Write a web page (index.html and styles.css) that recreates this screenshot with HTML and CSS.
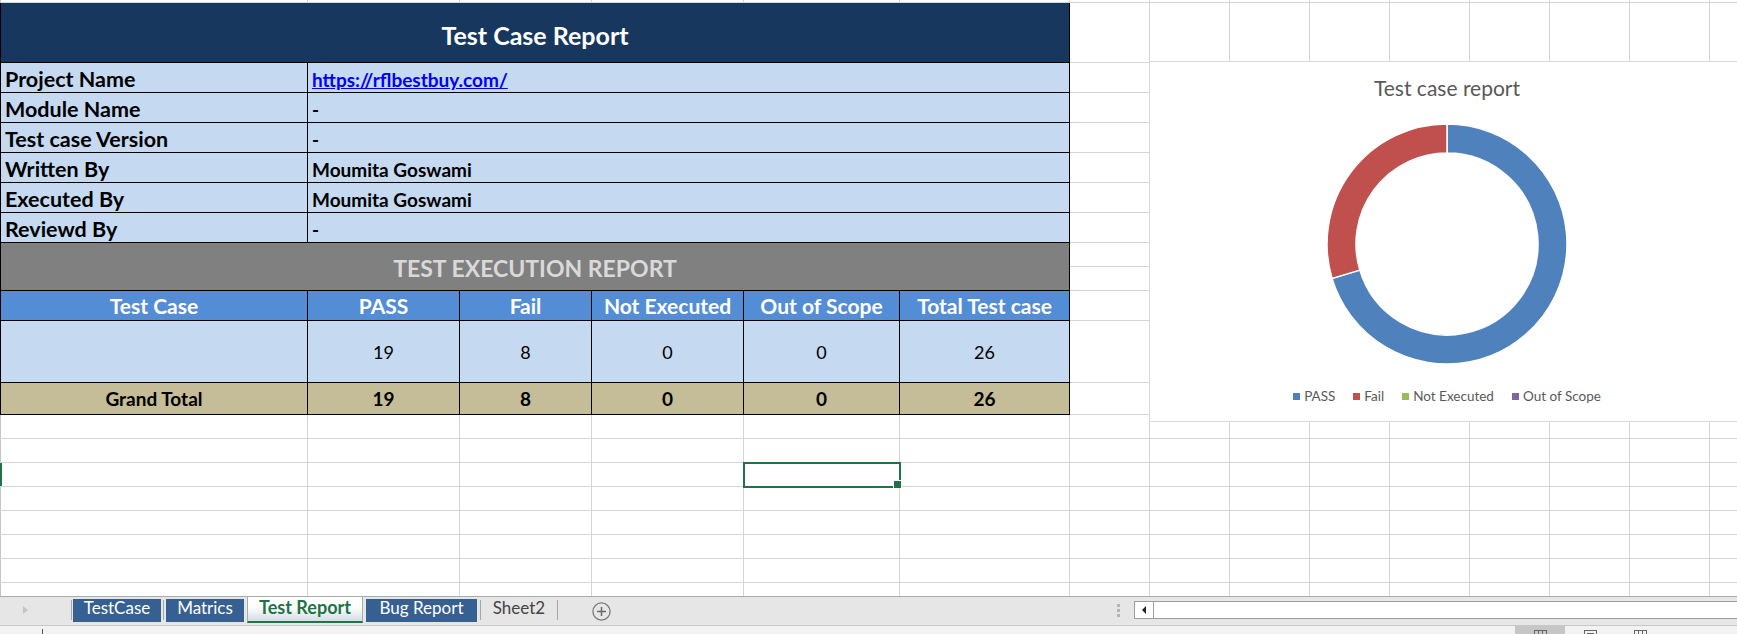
FILE: index.html
```html
<!DOCTYPE html>
<html lang="en">
<head>
<meta charset="utf-8">
<title>Test Case Report</title>
<link rel="stylesheet" href="styles.css">
</head>
<body>
<div class="app">
  <div class="sheet">
    <div class="report">
      <div class="title">Test Case Report</div>
      <div class="lab">Project Name</div><div class="val"><a class="link" href="#">https://rflbestbuy.com/</a></div>
      <div class="lab">Module Name</div><div class="val">-</div>
      <div class="lab">Test case Version</div><div class="val">-</div>
      <div class="lab">Written By</div><div class="val">Moumita Goswami</div>
      <div class="lab">Executed By</div><div class="val">Moumita Goswami</div>
      <div class="lab">Reviewd By</div><div class="val">-</div>
      <div class="band">TEST EXECUTION REPORT</div>
      <div class="th">Test Case</div><div class="th">PASS</div><div class="th">Fail</div><div class="th">Not Executed</div><div class="th">Out of Scope</div><div class="th">Total Test case</div>
      <div class="td"></div><div class="td">19</div><div class="td">8</div><div class="td">0</div><div class="td">0</div><div class="td">26</div>
      <div class="tt">Grand Total</div><div class="tt">19</div><div class="tt">8</div><div class="tt">0</div><div class="tt">0</div><div class="tt">26</div>
    </div>
    <div class="sel"></div>
    <div class="rowmark"></div>

    <div class="c"></div><div class="c"></div><div class="c"></div><div class="c"></div><div class="c"></div><div class="c"></div><div class="c"></div><div class="c"></div><div class="c"></div><div class="c"></div><div class="c"></div><div class="c"></div><div class="c"></div><div class="c"></div><div class="c"></div>
    <div class="c"></div><div class="c"></div><div class="c"></div><div class="c"></div><div class="c"></div><div class="c"></div><div class="c"></div><div class="c"></div><div class="c"></div><div class="c"></div><div class="c"></div><div class="c"></div><div class="c"></div><div class="c"></div><div class="c"></div>
    <div class="c"></div><div class="c"></div><div class="c"></div><div class="c"></div><div class="c"></div><div class="c"></div><div class="c"></div><div class="c"></div><div class="c"></div><div class="c"></div><div class="c"></div><div class="c"></div><div class="c"></div><div class="c"></div><div class="c"></div>
    <div class="c"></div><div class="c"></div><div class="c"></div><div class="c"></div><div class="c"></div><div class="c"></div><div class="c"></div><div class="c"></div><div class="c"></div><div class="c"></div><div class="c"></div><div class="c"></div><div class="c"></div><div class="c"></div><div class="c"></div>
    <div class="c"></div><div class="c"></div><div class="c"></div><div class="c"></div><div class="c"></div><div class="c"></div><div class="c"></div><div class="c"></div><div class="c"></div><div class="c"></div><div class="c"></div><div class="c"></div><div class="c"></div><div class="c"></div><div class="c"></div>
    <div class="c"></div><div class="c"></div><div class="c"></div><div class="c"></div><div class="c"></div><div class="c"></div><div class="c"></div><div class="c"></div><div class="c"></div><div class="c"></div><div class="c"></div><div class="c"></div><div class="c"></div><div class="c"></div><div class="c"></div>
    <div class="c"></div><div class="c"></div><div class="c"></div><div class="c"></div><div class="c"></div><div class="c"></div><div class="c"></div><div class="c"></div><div class="c"></div><div class="c"></div><div class="c"></div><div class="c"></div><div class="c"></div><div class="c"></div><div class="c"></div>
    <div class="c"></div><div class="c"></div><div class="c"></div><div class="c"></div><div class="c"></div><div class="c"></div><div class="c"></div><div class="c"></div><div class="c"></div><div class="c"></div><div class="c"></div><div class="c"></div><div class="c"></div><div class="c"></div><div class="c"></div>
    <div class="c"></div><div class="c"></div><div class="c"></div><div class="c"></div><div class="c"></div><div class="c"></div><div class="c"></div><div class="c"></div><div class="c"></div><div class="c"></div><div class="c"></div><div class="c"></div><div class="c"></div><div class="c"></div><div class="c"></div>
    <div class="c"></div><div class="c"></div><div class="c"></div><div class="c"></div><div class="c"></div><div class="c"></div><div class="c"></div><div class="c"></div><div class="c"></div><div class="c"></div><div class="c"></div><div class="c"></div><div class="c"></div><div class="c"></div><div class="c"></div>
    <div class="c"></div><div class="c"></div><div class="c"></div><div class="c"></div><div class="c"></div><div class="c"></div><div class="c"></div><div class="c"></div><div class="c"></div><div class="c"></div><div class="c"></div><div class="c"></div><div class="c"></div><div class="c"></div><div class="c"></div>
    <div class="c"></div><div class="c"></div><div class="c"></div><div class="c"></div><div class="c"></div><div class="c"></div><div class="c"></div><div class="c"></div><div class="c"></div><div class="c"></div><div class="c"></div><div class="c"></div><div class="c"></div><div class="c"></div><div class="c"></div>
    <div class="c"></div><div class="c"></div><div class="c"></div><div class="c"></div><div class="c"></div><div class="c"></div><div class="c"></div><div class="c"></div><div class="c"></div><div class="c"></div><div class="c"></div><div class="c"></div><div class="c"></div><div class="c"></div><div class="c"></div>
    <div class="c"></div><div class="c"></div><div class="c"></div><div class="c"></div><div class="c"></div><div class="c"></div><div class="c"></div><div class="c"></div><div class="c"></div><div class="c"></div><div class="c"></div><div class="c"></div><div class="c"></div><div class="c"></div><div class="c"></div>
    <div class="c"></div><div class="c"></div><div class="c"></div><div class="c"></div><div class="c"></div><div class="c"></div><div class="c"></div><div class="c"></div><div class="c"></div><div class="c"></div><div class="c"></div><div class="c"></div><div class="c"></div><div class="c"></div><div class="c"></div>
    <div class="c"></div><div class="c"></div><div class="c"></div><div class="c"></div><div class="c"></div><div class="c"></div><div class="c"></div><div class="c"></div><div class="c"></div><div class="c"></div><div class="c"></div><div class="c"></div><div class="c"></div><div class="c"></div><div class="c"></div>
    <div class="c"></div><div class="c"></div><div class="c"></div><div class="c"></div><div class="c"></div><div class="c"></div><div class="c"></div><div class="c"></div><div class="c"></div><div class="c"></div><div class="c"></div><div class="c"></div><div class="c"></div><div class="c"></div><div class="c"></div>

    <div class="chart">
      <div class="chart-title">Test case report</div>
      <svg class="donut" viewBox="0 0 260 260" width="260" height="260">
        <path d="M130,10 A120,120 0 1 1 15.04,164.42 L42.82,156.10 A91,91 0 1 0 130,39 Z" fill="#4f81bd" stroke="#fff" stroke-width="1.5"/>
        <path d="M15.04,164.42 A120,120 0 0 1 130,10 L130,39 A91,91 0 0 0 42.82,156.10 Z" fill="#c0504d" stroke="#fff" stroke-width="1.5"/>
      </svg>
      <div class="legend">
        <div class="key"><span class="sw sw-pass"></span>PASS</div>
        <div class="key"><span class="sw sw-fail"></span>Fail</div>
        <div class="key"><span class="sw sw-ne"></span>Not Executed</div>
        <div class="key"><span class="sw sw-oos"></span>Out of Scope</div>
      </div>
    </div>
  </div>

  <div class="tabbar">
    <div class="tabs-area">
      <div class="nav"><span class="tri"></span></div>
      <span class="sep"></span>
      <div class="tab tab-first">TestCase</div>
      <span class="sep sep-2"></span>
      <div class="tab tab-matrics">Matrics</div>
      <div class="tab tab-active">Test Report</div>
      <div class="tab tab-bug">Bug Report</div>
      <span class="sep sep-3"></span>
      <div class="tab tab-plain">Sheet2</div>
      <span class="sep sep-4"></span>
      <svg class="plus" viewBox="0 0 19 19" width="19" height="19">
        <circle cx="9.5" cy="9.5" r="8.6" fill="none" stroke="#7a7a7a" stroke-width="1.3"/>
        <path d="M9.5,5 V14 M5,9.5 H14" stroke="#6a6a6a" stroke-width="1.5"/>
      </svg>
    </div>
    <div class="hscroll">
      <div class="grip"><span></span><span></span><span></span></div>
      <div class="sbar"><div class="sbtn"><span class="ltri"></span></div></div>
    </div>
  </div>

  <div class="status">
    <div class="st-left"><span class="st-mark"></span></div>
    <div class="vbtn vbtn-on"><span class="vicon"></span></div>
    <div class="vbtn"><span class="vicon vicon-page"></span></div>
    <div class="vbtn"><span class="vicon"></span></div>
  </div>
</div>
</body>
</html>
```

FILE: styles.css
```css
* { box-sizing: border-box; }
html, body { margin: 0; padding: 0; }
body {
  width: 1737px;
  height: 634px;
  overflow: hidden;
  background: #fff;
  font-family: Lato, "Open Sans", "Liberation Sans", sans-serif;
  color: #000;
}
.app {
  width: 1737px;
  height: 634px;
  display: flex;
  flex-direction: column;
  overflow: hidden;
}

/* ---------- worksheet grid ---------- */
.sheet {
  position: relative;
  flex: none;
  height: 596px;
  display: grid;
  grid-template-columns: 308px 152px 132px 152px 156px 170px repeat(9, 80px);
  grid-template-rows: 3px 60px repeat(6, 30px) 24px 24px 30px 62px 32px repeat(8, 24px);
  overflow: hidden;
  box-shadow: inset 1px 0 0 #c6c6c6;
}
.c {
  border-right: 1px solid #d4d4d4;
  border-bottom: 1px solid #d4d4d4;
}
.sel {
  grid-column: 5;
  grid-row: 16;
  position: relative;
  z-index: 1;
  border-right: 1px solid #d4d4d4;
  border-bottom: 1px solid #d4d4d4;
}
.sel::before {
  content: "";
  position: absolute;
  left: -1px;
  top: -1px;
  right: -2px;
  bottom: -2px;
  border: 2px solid #217346;
}
.sel::after {
  content: "";
  position: absolute;
  right: -3px;
  bottom: -3px;
  width: 7px;
  height: 7px;
  background: #217346;
  border: 1px solid #fff;
}
.rowmark {
  grid-column: 1;
  grid-row: 16;
  border-right: 1px solid #d4d4d4;
  border-bottom: 1px solid #d4d4d4;
  box-shadow: inset 2px 0 0 #217346;
}

/* ---------- report table ---------- */
.report {
  grid-column: 1 / 7;
  grid-row: 2 / 14;
  display: grid;
  grid-template-columns: 307px 152px 132px 152px 156px 170px;
  grid-template-rows: 60px repeat(6, 30px) 24px 24px 30px 62px 32px;
  border-left: 1px solid #000;
}
.report > div {
  border-right: 1px solid #000;
  border-bottom: 1px solid #000;
  white-space: nowrap;
  display: flex;
}
.title {
  grid-column: 1 / -1;
  background: #17375e;
  color: #fff;
  font-weight: 700;
  font-size: 25px;
  align-items: center;
  justify-content: center;
  padding-top: 4px;
}
.lab {
  background: #c5d9f1;
  font-weight: 700;
  font-size: 21.5px;
  align-items: flex-end;
  padding: 0 0 0 4px;
}
.val {
  grid-column: span 5;
  background: #c5d9f1;
  font-weight: 700;
  font-size: 19px;
  align-items: flex-end;
  padding: 0 0 1px 4px;
}
.link {
  color: #0000ff;
  text-decoration: underline;
}
.band {
  grid-column: 1 / -1;
  grid-row: span 2;
  background: #808080;
  color: #d9d9d9;
  font-weight: 700;
  font-size: 23px;
  align-items: center;
  justify-content: center;
  padding-top: 2px;
}
.th {
  background: #538dd5;
  color: #fff;
  font-weight: 700;
  font-size: 21px;
  align-items: center;
  justify-content: center;
}
.td {
  background: #c5d9f1;
  font-size: 18px;
  align-items: center;
  justify-content: center;
}
.tt {
  background: #c4bd97;
  font-weight: 700;
  font-size: 19px;
  align-items: center;
  justify-content: center;
}

/* ---------- chart ---------- */
.chart {
  position: absolute;
  left: 1149px;
  top: 61px;
  width: 596px;
  height: 361px;
  z-index: 2;
  background: #fff;
  border: 1px solid #d9d9d9;
  display: flex;
  flex-direction: column;
  align-items: center;
}
.chart-title {
  margin-top: 14px;
  font-size: 21px;
  line-height: 24px;
  color: #595959;
}
.donut {
  display: block;
  margin-top: 14px;
}
.legend {
  margin-top: 14px;
  display: flex;
  gap: 18px;
  font-size: 13.5px;
  line-height: 16px;
  color: #595959;
}
.key {
  display: flex;
  align-items: center;
  gap: 4px;
}
.sw { width: 7px; height: 7px; display: block; }
.sw-pass { background: #4f81bd; }
.sw-fail { background: #c0504d; }
.sw-ne { background: #9bbb59; }
.sw-oos { background: #8064a2; }

/* ---------- sheet tabs ---------- */
.tabbar {
  flex: none;
  height: 29px;
  background: #e6e6e6;
  border-top: 1px solid #ababab;
  display: flex;
  align-items: flex-start;
  overflow: hidden;
}
.tabs-area {
  flex: none;
  width: 1112px;
  display: flex;
  align-items: flex-start;
}
.nav {
  width: 71px;
  height: 28px;
  padding: 9px 0 0 23px;
}
.tri {
  display: block;
  width: 0;
  height: 0;
  border-left: 5px solid #c4c4c4;
  border-top: 4.5px solid transparent;
  border-bottom: 4.5px solid transparent;
}
.sep {
  display: block;
  width: 1px;
  height: 20px;
  margin-top: 3px;
  background: #a6a6a6;
}
.sep-2 { margin-left: 2px; }
.sep-3 { margin-left: 3px; }
.sep-4 { margin-left: 0; }
.tab {
  height: 23px;
  margin-top: 2px;
  display: flex;
  align-items: center;
  justify-content: center;
  padding-bottom: 7px;
  font-size: 17px;
  line-height: 1;
  color: #fff;
  background: #366092;
  white-space: nowrap;
}
.tab-first { width: 88px; margin-left: 1px; }
.tab-matrics { width: 78px; margin-left: 2px; }
.tab-active {
  width: 116px;
  height: 26px;
  margin-top: 0;
  margin-left: 3px;
  padding-bottom: 5px;
  background: linear-gradient(#ffffff, #ffffff 40%, #d5dce6);
  color: #217346;
  font-weight: 700;
  font-size: 18px;
  border-left: 1px solid #ababab;
  border-right: 1px solid #ababab;
  border-bottom: 2px solid #217346;
}
.tab-bug { width: 111px; margin-left: 3px; }
.tab-plain {
  width: 76px;
  background: none;
  color: #444;
}
.plus {
  display: block;
  margin: 5px 0 0 34px;
}

.hscroll {
  flex: 1;
  display: flex;
  align-items: flex-start;
}
.grip {
  margin: 7px 0 0 5px;
  display: flex;
  flex-direction: column;
  gap: 2px;
}
.grip span {
  display: block;
  width: 3px;
  height: 3px;
  background: #b4b4b4;
}
.sbar {
  flex: none;
  width: 700px;
  height: 18px;
  margin: 4px 0 0 14px;
  background: #fff;
  border: 1px solid #9c9c9c;
  display: flex;
}
.sbtn {
  width: 19px;
  height: 16px;
  border-right: 1px solid #9c9c9c;
  display: flex;
  align-items: center;
  justify-content: center;
}
.ltri {
  display: block;
  width: 0;
  height: 0;
  border-right: 4px solid #222;
  border-top: 4px solid transparent;
  border-bottom: 4px solid transparent;
}

/* ---------- status bar ---------- */
.status {
  flex: none;
  height: 9px;
  background: #f2f2f2;
  border-top: 1px solid #c8c8c8;
  display: flex;
  overflow: hidden;
}
.st-left {
  width: 1515px;
  flex: none;
}
.st-mark {
  display: block;
  width: 1px;
  height: 5px;
  margin: 3px 0 0 42px;
  background: #555;
}
.vbtn {
  width: 50px;
  flex: none;
  display: flex;
  justify-content: center;
}
.vbtn-on { background: #c6c6c6; }
.vicon {
  display: block;
  width: 13px;
  height: 12px;
  margin-top: 4px;
  border: 1px solid #666;
  position: relative;
}
.vicon::before {
  content: "";
  position: absolute;
  left: 3px;
  right: 3px;
  top: 0;
  bottom: 0;
  border-left: 1px solid #666;
  border-right: 1px solid #666;
}
.vicon-page::before {
  left: 2px;
  right: 2px;
  top: 2px;
  border: 1px solid #666;
}
```
